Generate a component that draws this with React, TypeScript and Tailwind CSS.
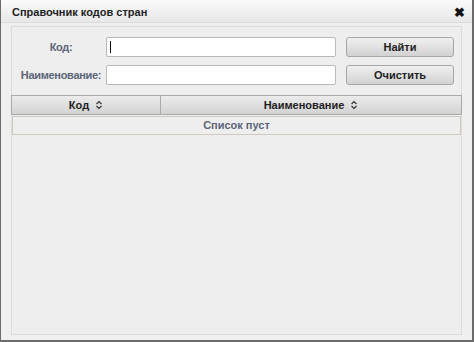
import React from "react";

const SortIcon = () => (
  <svg width="8" height="10" viewBox="0 0 8 10" className="inline-block ml-1.5">
    <path d="M1.5 4 L4 1.5 L6.5 4 M1.5 6 L4 8.5 L6.5 6" fill="none" stroke="#333" strokeWidth="1.2" />
  </svg>
);

const Field = ({ label, button, cursor }: { label: string; button: string; cursor?: boolean }) => (
  <div className="flex items-center h-[20px]">
    <span className="w-[90px] ml-[4px] text-center font-bold text-[#5b6478] tracking-[-0.3px]">{label}</span>
    <div className="w-[230px] h-[20px] bg-white border border-[#b9b9b9] rounded-[2px] flex items-center pl-[3px]">
      {cursor && <span className="w-px h-[12px] bg-black" />}
    </div>
    <button className="ml-[10px] w-[108px] h-[20px] rounded-[3px] border border-[#a6a6a6] bg-gradient-to-b from-[#f0f0f0] to-[#d2d2d2] font-bold text-[#1e1e1e]">
      {button}
    </button>
  </div>
);

const App = () => {
  return (
    <div
      className="w-[474px] h-[342px] bg-[#efefef] border-l border-r-2 border-b-2 border-[#6b6b6b] flex flex-col text-[11px]"
      style={{ fontFamily: "'Liberation Sans', Arial, sans-serif" }}
    >
      <div className="h-[23px] flex items-center justify-between pl-[11px] pr-[7px] pt-[2px] bg-gradient-to-b from-[#fafafa] to-[#e8e8e8] border-b border-[#dcdcdc]">
        <span className="font-bold text-[11px] text-[#1e1e1e]">Справочник кодов стран</span>
        <span className="text-[13px] font-bold leading-none text-[#111]">✖</span>
      </div>
      <div className="flex-1 px-[10px] pt-[3px] pb-[5px]">
        <div className="h-full border border-[#dcdcdc] bg-[#eeeeee] flex flex-col">
          <div className="flex flex-col gap-[8px] pt-[10px]">
            <Field label="Код:" button="Найти" cursor />
            <Field label="Наименование:" button="Очистить" />
          </div>
          <div className="mt-[10px] flex h-[20px] border border-[#a9a9a9] bg-gradient-to-b from-[#ececec] to-[#d3d3d3] font-bold text-[#1e1e1e] -mx-px">
            <div className="w-[149px] flex items-center justify-center border-r border-[#a9a9a9]">
              Код <SortIcon />
            </div>
            <div className="flex-1 flex items-center justify-center">
              Наименование <SortIcon />
            </div>
          </div>
          <div className="mt-[1px] h-[19px] border border-[#cfc9bf] flex items-center justify-center font-bold text-[#5b6478]">
            Список пуст
          </div>
        </div>
      </div>
    </div>
  );
};

export default App;
